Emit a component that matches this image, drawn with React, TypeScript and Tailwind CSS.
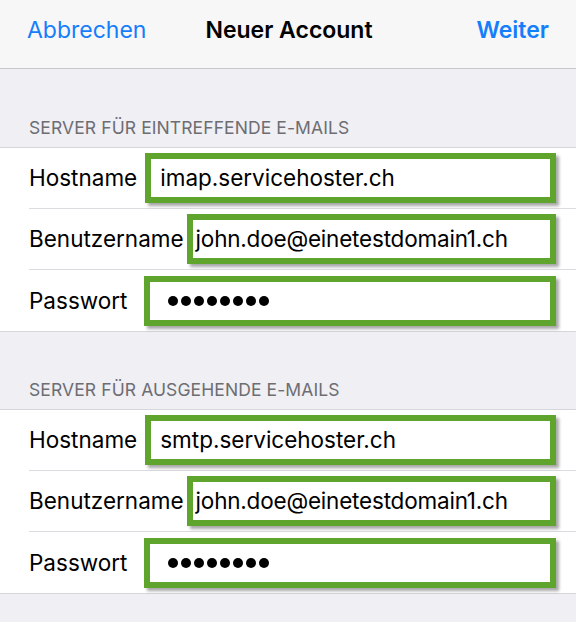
import type { ReactNode } from 'react'

const font = { fontFamily: 'Inter, "Noto Sans", sans-serif' }

function Box({ children, className }: { children: ReactNode; className: string }) {
  return (
    <div
      className={`h-[50px] flex items-center border-[6px] border-[#5fa42d] bg-white shadow-[3px_3px_3px_rgba(0,0,0,0.35)] ${className}`}
    >
      {children}
    </div>
  )
}

function Dots() {
  return (
    <div className="flex gap-[3px]">
      {Array.from({ length: 8 }).map((_, i) => (
        <span key={i} className="w-[10px] h-[10px] rounded-full bg-black" />
      ))}
    </div>
  )
}

function Row({ label, children, last }: { label: string; children: ReactNode; last?: boolean }) {
  return (
    <div className="pl-[29px]">
      <div className={`h-[61px] flex items-center ${last ? '' : 'border-b border-[#dcdce0]'}`}>
        <span className="text-[22.5px] text-black">{label}</span>
        {children}
      </div>
    </div>
  )
}

function Section({ title, host }: { title: string; host: string }) {
  return (
    <>
      <div className="px-[29px] pb-[9px] text-[17.5px] leading-[20px] text-[#6d6d72] tracking-[0.1px]">
        {title}
      </div>
      <div className="bg-white border-y border-[#d6d6da]">
        <Row label="Hostname">
          <Box className="ml-[8px] mr-[20px] flex-1 pl-[9px]">
            <span className="text-[22.5px] text-black">{host}</span>
          </Box>
        </Row>
        <Row label="Benutzername">
          <Box className="ml-[3px] mr-[20px] flex-1 pl-[3px]">
            <span className="text-[22.5px] text-black tracking-[-0.2px]">john.doe@einetestdomain1.ch</span>
          </Box>
        </Row>
        <Row label="Passwort" last>
          <Box className="ml-[17px] mr-[20px] flex-1 pl-[18px]">
            <Dots />
          </Box>
        </Row>
      </div>
    </>
  )
}

export default function App() {
  return (
    <div className="w-[576px] h-[622px] bg-[#efeff4] overflow-hidden" style={font}>
      {/* nav bar */}
      <div className="h-[69px] bg-[#f7f7f7] border-b border-[#c8c8cc] flex items-start pt-[16px] px-[27px] text-[23px] leading-[28px]">
        <span className="text-[#157efb] w-[150px]">Abbrechen</span>
        <span className="flex-1 text-center font-semibold text-black pr-[40px]">Neuer Account</span>
        <span className="text-[#157efb] font-semibold w-[108px] text-right">Weiter</span>
      </div>

      <div className="pt-[49px]">
        <Section title="SERVER FÜR EINTREFFENDE E-MAILS" host="imap.servicehoster.ch" />
      </div>
      <div className="pt-[48px]">
        <Section title="SERVER FÜR AUSGEHENDE E-MAILS" host="smtp.servicehoster.ch" />
      </div>
    </div>
  )
}
